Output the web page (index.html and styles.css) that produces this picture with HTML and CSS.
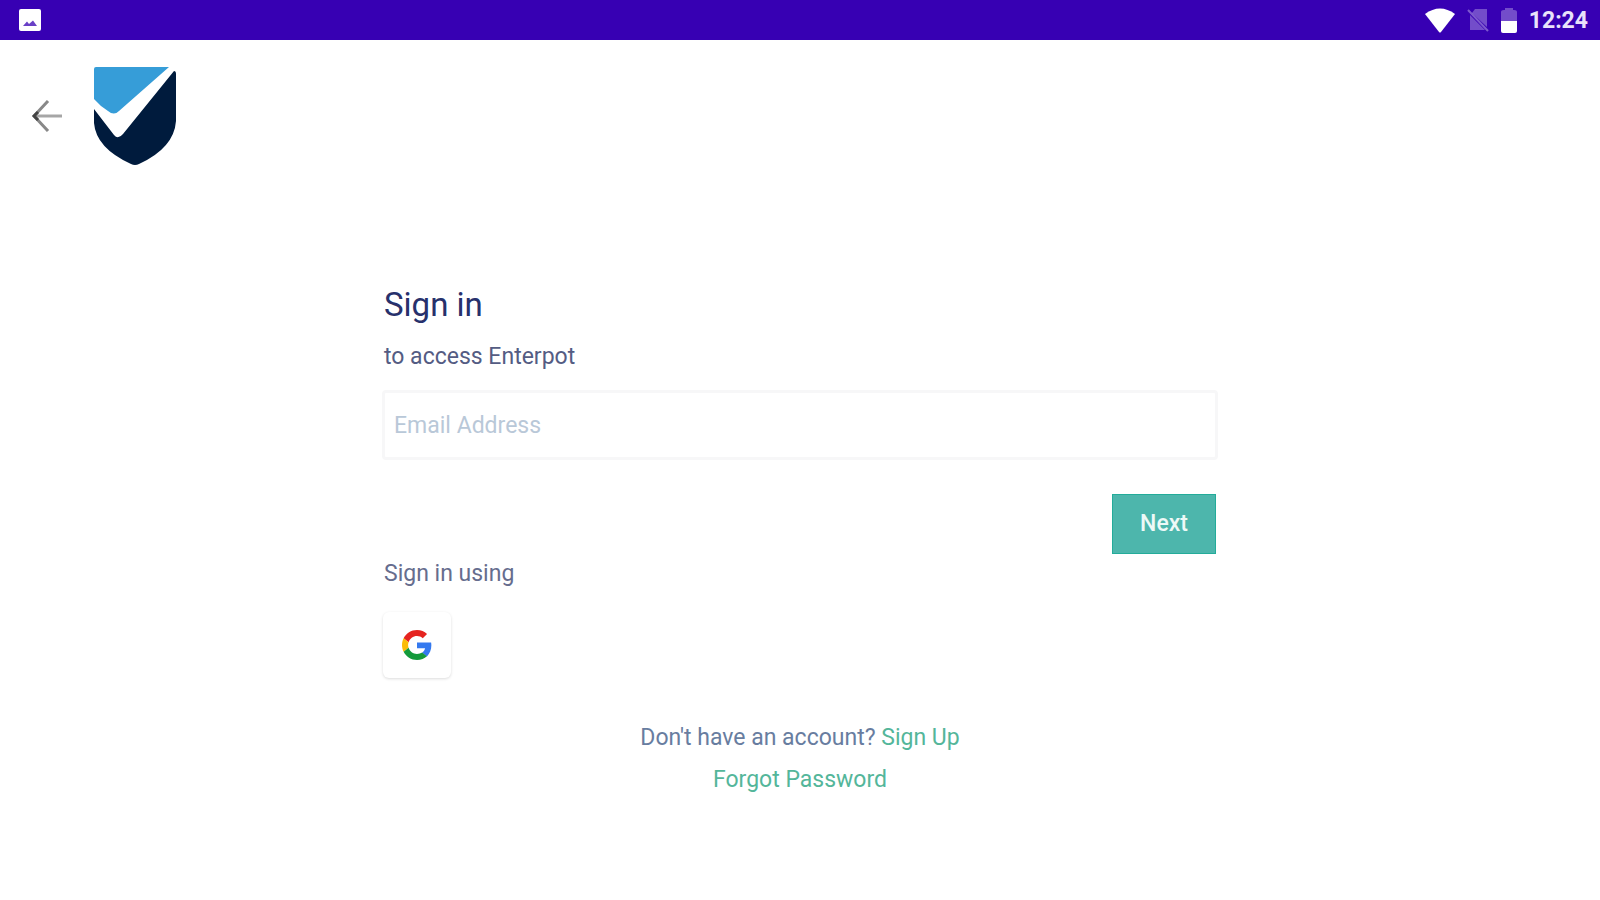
FILE: index.html
```html
<!DOCTYPE html>
<html lang="en">
<head>
<meta charset="utf-8">
<meta name="viewport" content="width=device-width, initial-scale=1">
<title>Sign in</title>
<link rel="stylesheet" href="styles.css">
</head>
<body>
<div class="status-bar">
  <svg class="status-photo" width="22" height="22" viewBox="0 0 22 22" aria-hidden="true">
    <rect width="22" height="22" rx="2" fill="#fff"/>
    <path d="M4 17L8 12.500L10 15L14 11.500L18 17Z" fill="#3700b3" opacity=".75"/>
  </svg>
  <div class="status-right">
    <svg width="30" height="25" viewBox="0 0 30 25" aria-hidden="true"><path d="M0 6Q15-5 30 6L16 24Q15 25 14 24Z" fill="#fff"/></svg>
    <svg width="22" height="24" viewBox="0 0 22 24" aria-hidden="true">
      <path d="M8 1H20V19L5 5ZM3 7L18 22H3Z" fill="#fff" opacity=".3"/>
      <path d="M1 2L21 23" stroke="#fff" stroke-width="2" opacity=".35"/>
    </svg>
    <svg width="16" height="25" viewBox="0 0 16 25" aria-hidden="true">
      <path d="M0 13V4Q0 2 3 2H4V0H12V2H13Q16 2 16 4V13Z" fill="#fff" opacity=".3"/>
      <path d="M0 13H16V23Q16 25 14 25H2Q0 25 0 23Z" fill="#fff"/>
    </svg>
    <span class="clock">12:24</span>
  </div>
</div>
<header class="header">
  <button class="back" type="button" aria-label="Back">
    <svg width="32" height="32" viewBox="0 0 32 32" fill="none" stroke-width="3">
      <path d="M2 16H30" stroke="#a6a6a6"/>
      <path d="M16 1L2 16L16 31" stroke="#888"/>
      <path d="M6 12L2 16L6 20" stroke="#444"/>
    </svg>
  </button>
  <svg width="84" height="100" viewBox="0 0 84 100" aria-hidden="true">
    <path d="M2 1H75L25 45Q20 50 14 45Q6 40 0 33V3Q0 1 2 1Z" fill="#369dd8"/>
    <path d="M80 5Q82 5 82 8V55Q80 82 45 98Q41 100 37 98Q2 82 0 57V43L20 69Q24 74 29 68Z" fill="#001b3d"/>
  </svg>
</header>
<main class="main">
  <form class="form">
    <h1 class="title">Sign in</h1>
    <label class="subtitle" for="email">to access Enterpot</label>
    <input class="email" id="email" type="email" placeholder="Email Address">
    <button class="next" type="button">Next</button>
    <p class="using">Sign in using</p>
    <button class="google" type="button" aria-label="Sign in with Google">
      <svg width="30" height="30" viewBox="0 0 48 48">
        <path fill="#e52420" d="M24 9.500c3.540 0 6.710 1.220 9.210 3.600l6.850-6.850C35.900 2.380 30.470 0 24 0 14.620 0 6.510 5.380 2.560 13.220l7.980 6.190C12.430 13.720 17.740 9.500 24 9.500z"/>
        <path fill="#3479ef" d="M46.980 24.550c0-1.570-.15-3.090-.38-4.550H24v9.020h12.940c-.58 2.960-2.260 5.480-4.780 7.180l7.730 6c4.510-4.180 7.090-10.360 7.090-17.650z"/>
        <path fill="#fbbc05" d="M10.530 28.590c-.48-1.450-.76-2.990-.76-4.590s.27-3.140.76-4.590l-7.980-6.190C.92 16.460 0 20.120 0 24s.92 7.540 2.560 10.780l7.970-6.190z"/>
        <path fill="#149a3b" d="M24 48c6.480 0 11.930-2.130 15.890-5.810l-7.730-6c-2.150 1.450-4.920 2.300-8.160 2.300-6.260 0-11.570-4.220-13.470-9.910l-7.980 6.190C6.510 42.620 14.620 48 24 48z"/>
      </svg>
    </button>
  </form>
  <div class="links">
    <p>Don't have an account? <a href="#">Sign Up</a></p>
    <p><a href="#">Forgot Password</a></p>
  </div>
</main>
</body>
</html>
```
FILE: styles.css
```css
* { box-sizing: border-box; }
body {
  margin: 0;
  background: #fff;
  color: #545c83;
  font: 23px/32px Roboto, "Liberation Sans", sans-serif;
}
h1, p { margin: 0; font-weight: 400; }
button { padding: 0; border: 0; background: none; font: inherit; cursor: pointer; }
svg { display: block; }
.status-bar {
  display: flex;
  justify-content: space-between;
  align-items: center;
  height: 40px;
  padding: 0 12px 0 19px;
  background: #3700b3;
}
.status-right { display: flex; align-items: center; gap: 12px; }
.clock { padding-top: 2px; color: #e9e2fa; font-weight: 700; line-height: 40px; }
.header {
  display: flex;
  align-items: center;
  gap: 30px;
  padding: 26px 32px;
}
.main { padding: 0 24px; }
.form {
  display: flex;
  flex-direction: column;
  align-items: flex-start;
  max-width: 836px;
  margin: 0 auto;
  padding-top: 91px;
}
.title { padding-left: 2px; color: #27316c; font-size: 33px; line-height: 44px; }
.subtitle { margin-top: 14px; padding-left: 2px; }
.email {
  width: 100%;
  height: 70px;
  margin-top: 17px;
  padding: 0 9px;
  border: 3px solid #f7f7f8;
  border-radius: 4px;
  background: #fff;
  color: #545c83;
  font: inherit;
}
.email::placeholder { color: #b9c8d8; opacity: 1; }
.next {
  align-self: flex-end;
  width: 104px;
  height: 60px;
  margin: 34px 2px 0 0;
  border: 1px solid #23ac9a;
  background: #4db6ac;
  color: #edf9f7;
  font-weight: 500;
}
.using { margin-top: 4px; padding-left: 2px; color: #666d8e; }
.google {
  display: grid;
  place-items: center;
  width: 68px;
  height: 66px;
  margin: 22px 0 0 1px;
  border-radius: 6px;
  background: #fff;
  box-shadow: 0 1px 3px rgba(0, 0, 0, 0.14);
}
.links { margin-top: 39px; line-height: 42px; color: #687da0; text-align: center; }
.links a { color: #54b69a; text-decoration: none; }
```
